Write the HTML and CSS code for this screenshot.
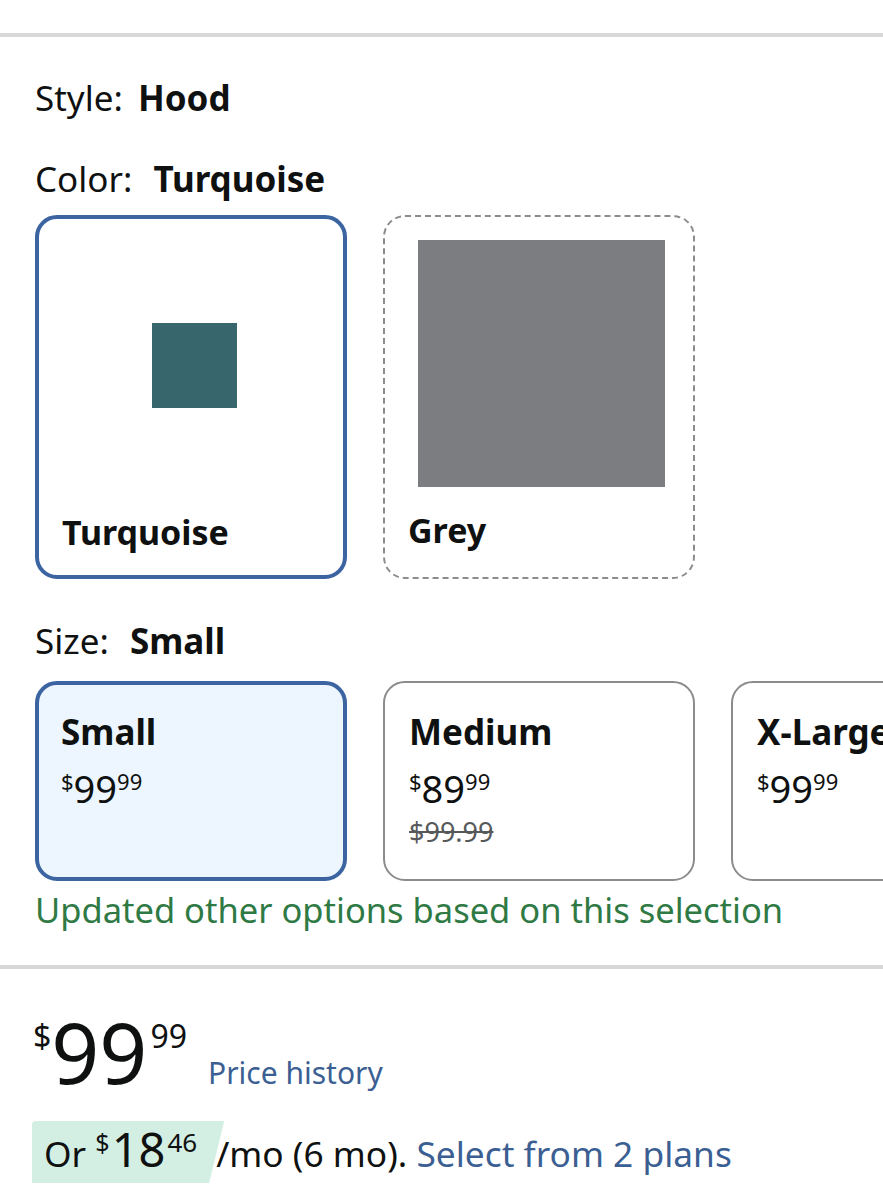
FILE: index.html
```html
<!DOCTYPE html>
<html lang="en">
<head>
<meta charset="utf-8">
<title>Product options</title>
<link rel="stylesheet" href="styles.css">
</head>
<body>
<div class="page">
  <hr class="divider divider-top">

  <section class="variations">
    <div class="label-row label-style">Style: <b class="value value-tight">Hood</b></div>
    <div class="label-row label-color">Color: <b class="value">Turquoise</b></div>

    <div class="swatch-row">
      <div class="swatch swatch-selected">
        <div class="swatch-img"><span class="chip chip-turquoise"></span></div>
        <div class="swatch-name">Turquoise</div>
      </div>
      <div class="swatch swatch-unavailable">
        <div class="swatch-img"><span class="chip chip-grey"></span></div>
        <div class="swatch-name">Grey</div>
      </div>
    </div>

    <div class="label-row label-size">Size: <b class="value">Small</b></div>

    <div class="size-row">
      <div class="size-card size-selected">
        <div class="size-name">Small</div>
        <div class="price-sm"><sup>$</sup>99<sup>99</sup></div>
      </div>
      <div class="size-card">
        <div class="size-name">Medium</div>
        <div class="price-sm"><sup>$</sup>89<sup>99</sup></div>
        <div class="price-was">$99.99</div>
      </div>
      <div class="size-card">
        <div class="size-name">X-Large</div>
        <div class="price-sm"><sup>$</sup>99<sup>99</sup></div>
      </div>
    </div>

    <p class="notice">Updated other options based on this selection</p>
  </section>

  <hr class="divider divider-mid">

  <section class="buybox">
    <div class="price-line">
      <span class="price-big"><sup class="cur">$</sup>99<sup class="cents">99</sup></span>
      <a class="link history" href="#">Price history</a>
    </div>
    <div class="plan-line">
      <span class="pill">Or <sup class="cur">$</sup><span class="amt">18</span><sup class="cents">46</sup></span>
      <span class="plan-text">/mo (6 mo). <a class="link" href="#">Select from 2 plans</a></span>
    </div>
  </section>
</div>
</body>
</html>
```

FILE: styles.css
```css
* { box-sizing: border-box; }

html, body {
  margin: 0;
  padding: 0;
  background: #fff;
}

body {
  font-family: "Noto Sans", "Open Sans", sans-serif;
  color: #0f1111;
  width: 883px;
  overflow: hidden;
}

.page {
  padding-top: 33px;
  height: 1200px;
  overflow: hidden;
}

.divider {
  border: 0;
  margin: 0;
  height: 4px;
  background: #d8d8d8;
}

.variations {
  padding: 0 0 0 35px;
}

.label-row {
  font-size: 35px;
  line-height: 44px;
  white-space: nowrap;
}

.label-style { margin-top: 39px; }
.label-color { margin-top: 37px; }
.label-size  { margin-top: 40px; }

.value {
  font-weight: 700;
  margin-left: 12px;
}
.value-tight { margin-left: 6px; }

/* colour swatches */
.swatch-row {
  display: flex;
  gap: 36px;
  margin-top: 14px;
}

.swatch {
  width: 312px;
  height: 364px;
  border-radius: 22px;
  display: flex;
  flex-direction: column;
}

.swatch-selected {
  border: 4px solid #3b64a1;
}

.swatch-unavailable {
  border: 2px dashed #8c8c8c;
}

.swatch-img {
  height: 274px;
  display: flex;
  align-items: center;
  justify-content: center;
}

.chip { display: block; }

.chip-turquoise {
  width: 85px;
  height: 85px;
  background: #37666c;
  margin-top: 18px;
  margin-left: 6px;
}

.chip-grey {
  width: 247px;
  height: 247px;
  background: #7b7d80;
  margin-top: 18px;
  margin-left: 4px;
}

.swatch-name {
  font-size: 34px;
  font-weight: 700;
  padding-left: 23px;
  margin-top: 19px;
  line-height: 40px;
}

/* sizes */
.size-row {
  display: flex;
  gap: 36px;
  margin-top: 18px;
}

.size-card {
  flex: 0 0 312px;
  height: 200px;
  border: 2px solid #8c8c8c;
  border-radius: 22px;
  padding: 27px 0 0 24px;
}

.size-selected {
  border: 4px solid #3b64a1;
  background: #edf6ff;
  padding: 25px 0 0 22px;
}

.size-name {
  font-size: 35px;
  font-weight: 700;
  line-height: 44px;
  white-space: nowrap;
}

.price-sm {
  font-size: 38px;
  line-height: 40px;
  margin-top: 14px;
  white-space: nowrap;
}

.price-sm sup {
  font-size: 22px;
  vertical-align: 13px;
  line-height: 0;
}

.price-was {
  font-size: 27px;
  color: #565959;
  text-decoration: line-through;
  line-height: 32px;
  margin-top: 8px;
}

.notice {
  margin: 7px 0 0;
  color: #2f7a44;
  font-size: 34.5px;
  line-height: 44px;
  white-space: nowrap;
}

.divider-mid { margin-top: 33px; }

/* buy box */
.buybox {
  padding: 0 0 0 35px;
}

.price-line {
  display: flex;
  align-items: baseline;
  margin-top: 38px;
  white-space: nowrap;
}

.price-big {
  font-size: 84px;
  line-height: 90px;
}

.price-big .cur {
  font-size: 32px;
  vertical-align: 36px;
  line-height: 0;
  margin-left: -2px;
}

.price-big .cents {
  font-size: 32px;
  vertical-align: 36px;
  line-height: 0;
  margin-left: 3px;
}

.link {
  color: #3b5f93;
  text-decoration: none;
}

.history {
  font-size: 30px;
  margin-left: 21px;
}

.plan-line {
  display: flex;
  align-items: baseline;
  margin-top: 24px;
  white-space: nowrap;
  font-size: 35.3px;
  line-height: 62px;
}

.pill {
  display: inline-block;
  height: 62px;
  background: #d3efe3;
  padding: 1px 27px 0 12px;
  margin-left: -3px;
  clip-path: polygon(0 0, 100% 0, calc(100% - 15px) 100%, 0 100%);
  border-radius: 4px 0 0 0;
}

.pill .cur {
  font-size: 25px;
  vertical-align: 15px;
  line-height: 0;
}

.pill .amt {
  font-size: 47px;
  line-height: 1;
  margin-left: 2px;
}

.pill .cents {
  font-size: 26px;
  vertical-align: 15px;
  line-height: 0;
  margin-left: 2px;
}

.plan-text { margin-left: -8px; }
```
